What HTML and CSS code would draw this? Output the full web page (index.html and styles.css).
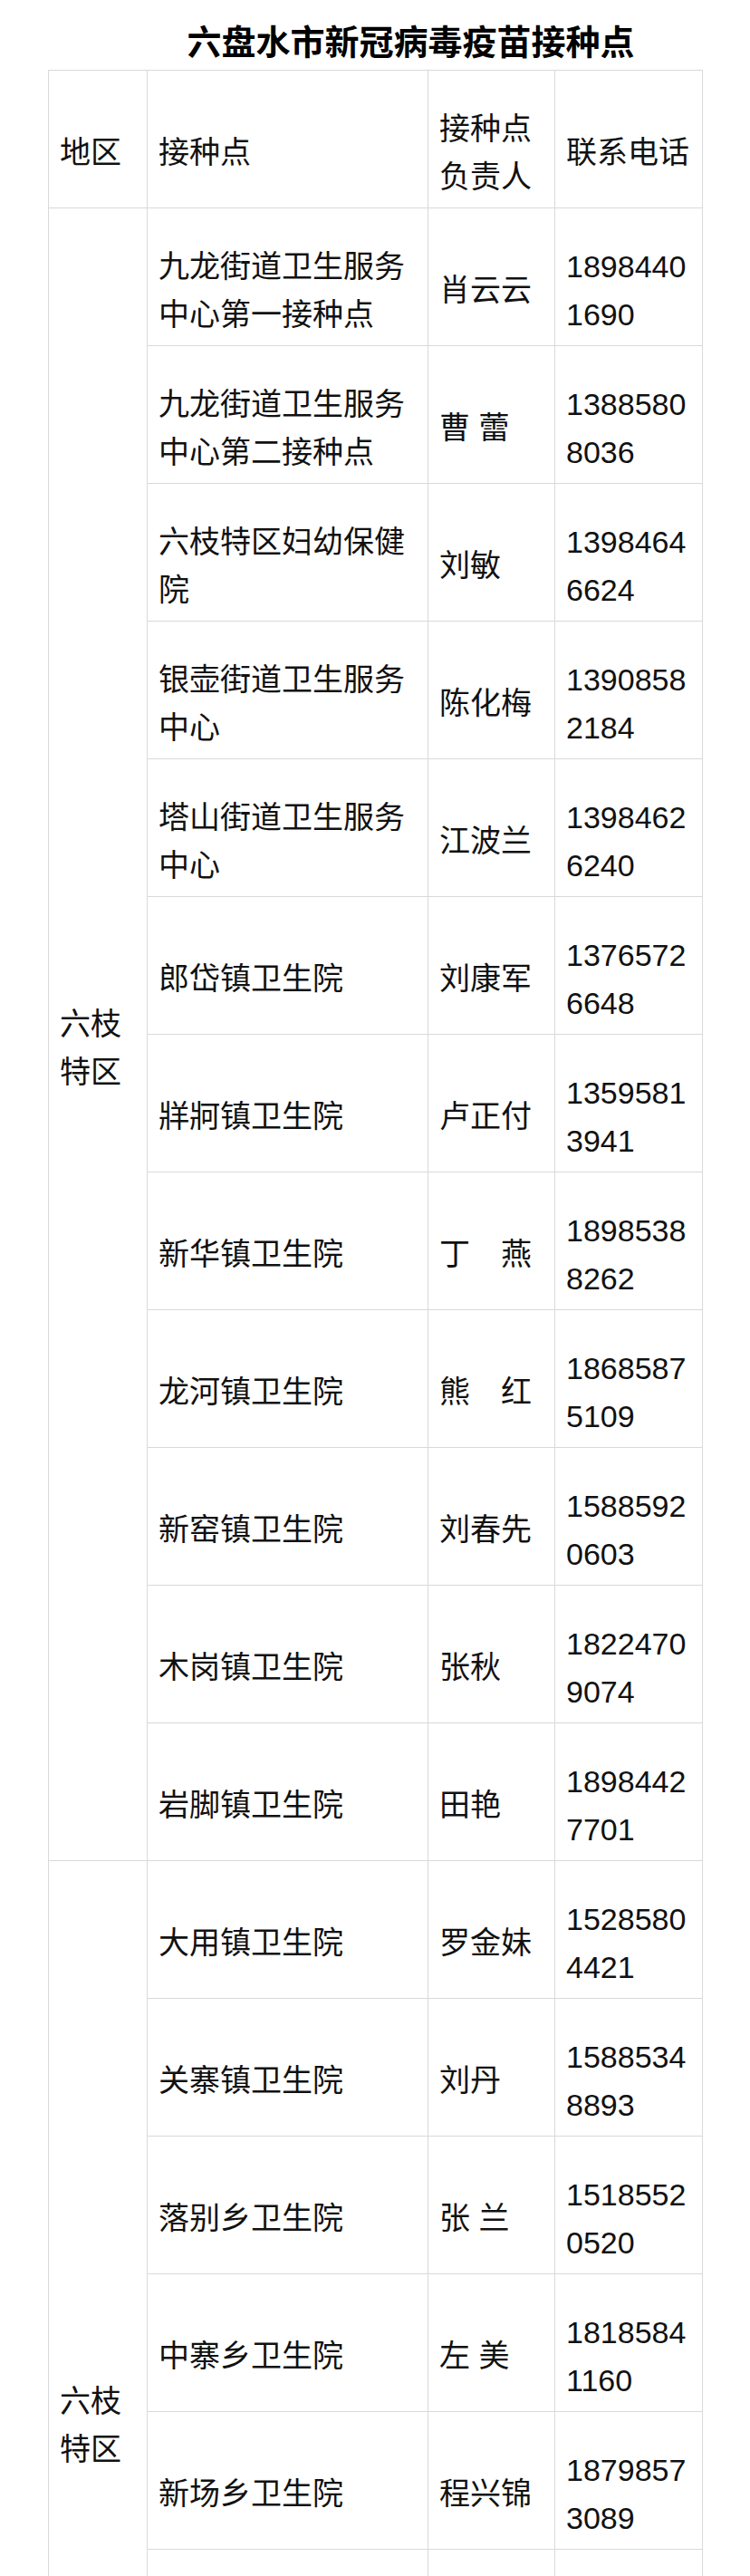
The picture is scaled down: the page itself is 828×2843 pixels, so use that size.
FILE: index.html
```html
<!DOCTYPE html>
<html lang="zh-CN">
<head>
<meta charset="utf-8">
<title>六盘水市新冠病毒疫苗接种点</title>
<link rel="stylesheet" href="styles.css">
</head>
<body>
<div class="page">
  <h1 class="title">六盘水市新冠病毒疫苗接种点</h1>
  <table class="sites">
    <colgroup>
      <col class="c-area"><col class="c-site"><col class="c-person"><col class="c-phone">
    </colgroup>
    <thead>
      <tr><th>地区</th><th>接种点</th><th>接种点负责人</th><th>联系电话</th></tr>
    </thead>
    <tbody>
      <tr><td rowspan="12" class="area">六枝特区</td><td>九龙街道卫生服务中心第一接种点</td><td>肖云云</td><td class="phone">18984401690</td></tr>
      <tr><td>九龙街道卫生服务中心第二接种点</td><td>曹 蕾</td><td class="phone">13885808036</td></tr>
      <tr><td>六枝特区妇幼保健院</td><td>刘敏</td><td class="phone">13984646624</td></tr>
      <tr><td>银壶街道卫生服务中心</td><td>陈化梅</td><td class="phone">13908582184</td></tr>
      <tr><td>塔山街道卫生服务中心</td><td>江波兰</td><td class="phone">13984626240</td></tr>
      <tr><td>郎岱镇卫生院</td><td>刘康军</td><td class="phone">13765726648</td></tr>
      <tr><td>牂牁镇卫生院</td><td>卢正付</td><td class="phone">13595813941</td></tr>
      <tr><td>新华镇卫生院</td><td>丁　燕</td><td class="phone">18985388262</td></tr>
      <tr><td>龙河镇卫生院</td><td>熊　红</td><td class="phone">18685875109</td></tr>
      <tr><td>新窑镇卫生院</td><td>刘春先</td><td class="phone">15885920603</td></tr>
      <tr><td>木岗镇卫生院</td><td>张秋</td><td class="phone">18224709074</td></tr>
      <tr><td>岩脚镇卫生院</td><td>田艳</td><td class="phone">18984427701</td></tr>
      <tr><td rowspan="8" class="area">六枝特区</td><td>大用镇卫生院</td><td>罗金妹</td><td class="phone">15285804421</td></tr>
      <tr><td>关寨镇卫生院</td><td>刘丹</td><td class="phone">15885348893</td></tr>
      <tr><td>落别乡卫生院</td><td>张 兰</td><td class="phone">15185520520</td></tr>
      <tr><td>中寨乡卫生院</td><td>左 美</td><td class="phone">18185841160</td></tr>
      <tr><td>新场乡卫生院</td><td>程兴锦</td><td class="phone">18798573089</td></tr>
      <tr><td>牛场镇卫生院</td><td>王 芳</td><td class="phone">18285896120</td></tr>
      <tr><td>陇脚乡卫生院</td><td>李 红</td><td class="phone">13984632150</td></tr>
      <tr><td>毛口乡卫生院</td><td>杨 丽</td><td class="phone">15885307416</td></tr>
    </tbody>
  </table>
</div>
</body>
</html>
```

FILE: styles.css
```css
html, body {
  margin: 0;
  padding: 0;
  background: #ffffff;
}

body {
  font-family: "Liberation Sans", "Noto Sans CJK SC", sans-serif;
  color: #111111;
}

.page {
  width: 722px;
  margin: 0 auto;
}

.title {
  margin: 0 0 8px 0;
  padding: 25px 0 0 79px;
  font-size: 38px;
  line-height: 44px;
  font-weight: bold;
  text-align: center;
  color: #000000;
}

.sites {
  width: 722px;
  border-collapse: collapse;
  table-layout: fixed;
}

.c-area { width: 109px; }
.c-site { width: 310px; }
.c-person { width: 140px; }
.c-phone { width: 163px; }

.sites th,
.sites td {
  border: 1px solid #d9d9d9;
  padding: 37px 12px 7px 12px;
  height: 107px;
  font-size: 34px;
  line-height: 53px;
  font-weight: normal;
  text-align: left;
  vertical-align: middle;
  word-break: break-all;
  color: #111111;
}

.sites td.phone {
  padding-right: 10px;
}
```
